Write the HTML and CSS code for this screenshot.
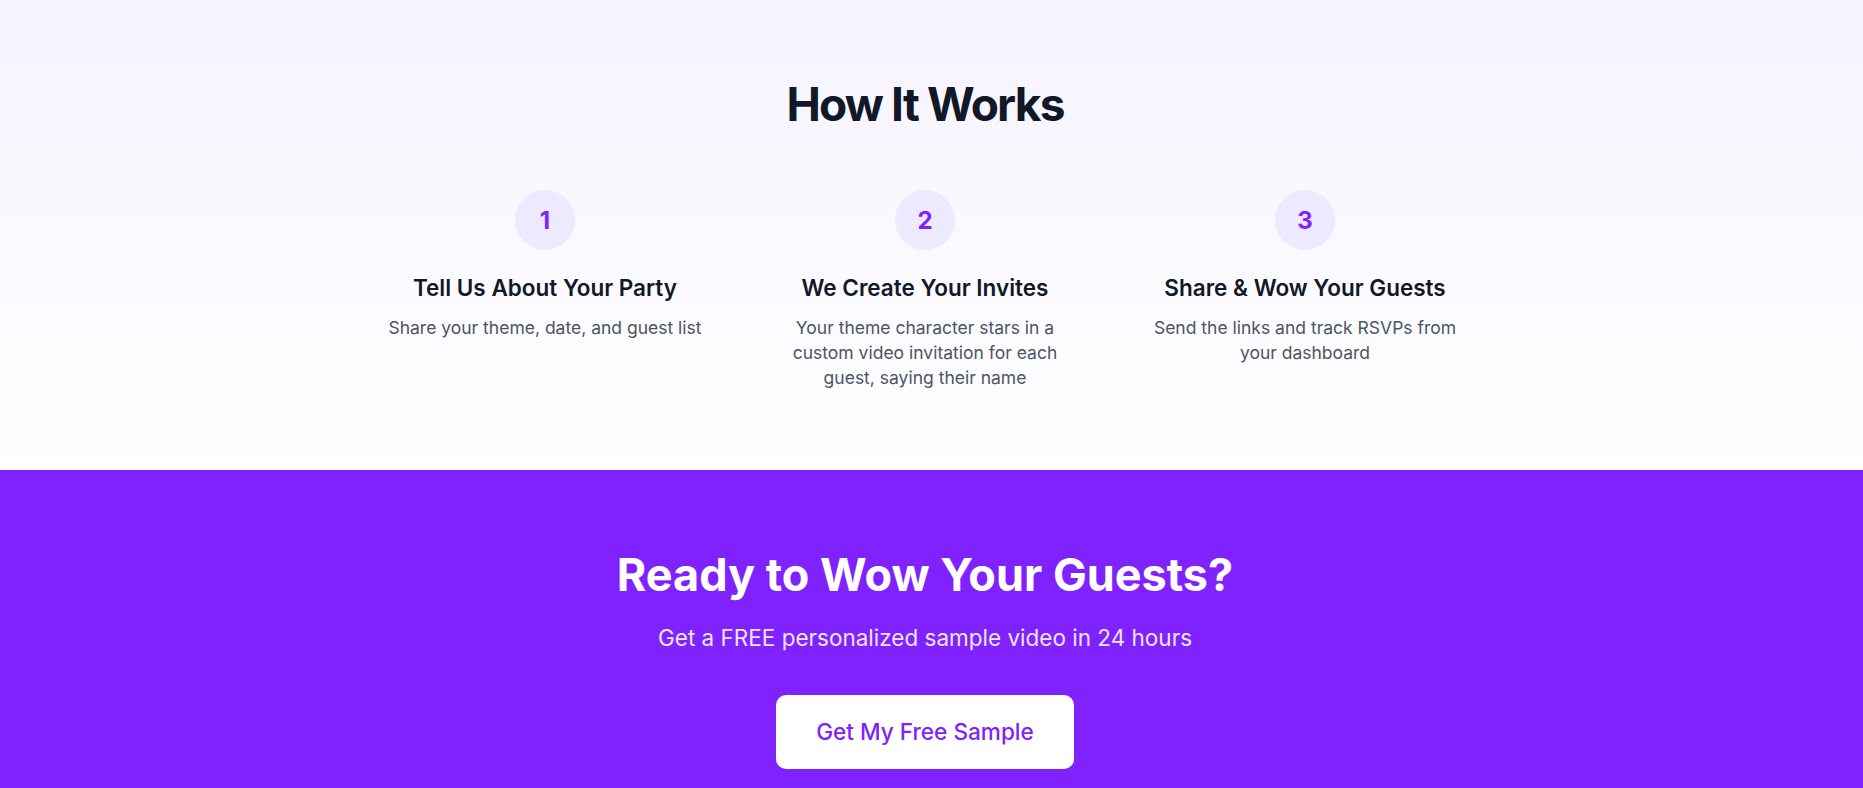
FILE: index.html
```html
<!DOCTYPE html>
<html lang="en">
<head>
<meta charset="utf-8">
<title>How It Works</title>
<link rel="stylesheet" href="styles.css">
</head>
<body>
  <section class="how">
    <div class="inner">
      <h2 class="how-title">How It Works</h2>
      <div class="steps">
        <div class="step">
          <div class="step-num">1</div>
          <h3 class="step-title">Tell Us About Your Party</h3>
          <p class="step-text">Share your theme, date, and guest list</p>
        </div>
        <div class="step">
          <div class="step-num">2</div>
          <h3 class="step-title">We Create Your Invites</h3>
          <p class="step-text">Your theme character stars in a custom video invitation for each guest, saying their name</p>
        </div>
        <div class="step">
          <div class="step-num">3</div>
          <h3 class="step-title">Share &amp; Wow Your Guests</h3>
          <p class="step-text">Send the links and track RSVPs from your dashboard</p>
        </div>
      </div>
    </div>
  </section>
  <section class="cta">
    <div class="inner cta-inner">
      <h2 class="cta-title">Ready to Wow Your Guests?</h2>
      <p class="cta-sub">Get a FREE personalized sample video in 24 hours</p>
      <a class="cta-btn" href="#">Get My Free Sample</a>
    </div>
  </section>
</body>
</html>
```

FILE: styles.css
```css
* { box-sizing: border-box; }
html, body { margin: 0; padding: 0; }
body {
  font-family: Inter, "Noto Sans", sans-serif;
  color: #111827;
  background: #7f22fe;
}
.how {
  background: linear-gradient(to bottom, #f5f3ff 0%, #ffffff 100%);
  padding: 80px 13px 80px 0;
}
.inner {
  max-width: 1140px;
  margin: 0 auto;
}
.how-title {
  margin: 0 0 62px;
  font-size: 46px;
  line-height: 48px;
  font-weight: 700;
  text-align: center;
  color: #111827;
  letter-spacing: -1.8px;
}
.steps {
  display: grid;
  grid-template-columns: repeat(3, 316px);
  column-gap: 64px;
  justify-content: center;
}
.step {
  display: flex;
  flex-direction: column;
  align-items: center;
  text-align: center;
}
.step-num {
  width: 60px;
  height: 60px;
  border-radius: 50%;
  background: #ede9fe;
  color: #7f22fe;
  font-size: 24px;
  font-weight: 700;
  display: flex;
  align-items: center;
  justify-content: center;
  margin-bottom: 22px;
}
.step-title {
  margin: 0 0 11px;
  font-size: 22.5px;
  line-height: 32px;
  font-weight: 600;
  color: #111827;
}
.step-text {
  margin: 0;
  font-size: 17.5px;
  line-height: 25px;
  color: #4b5563;
}
.cta {
  background: #7f22fe;
  padding: 80px 13px 80px 0;
  color: #fff;
}
.cta-inner {
  display: flex;
  flex-direction: column;
  align-items: center;
  text-align: center;
}
.cta-title {
  margin: 0 0 24px;
  font-size: 45px;
  line-height: 1.1;
  font-weight: 700;
  color: #fff;
}
.cta-sub {
  margin: 0 0 43px;
  font-size: 22.5px;
  line-height: 28px;
  color: #ede4ff;
}
.cta-btn {
  display: inline-block;
  background: #fff;
  color: #7f22fe;
  text-decoration: none;
  font-size: 22.6px;
  line-height: 28px;
  padding: 23px 40px;
  border-radius: 10px;
  font-weight: 500;
}
```
